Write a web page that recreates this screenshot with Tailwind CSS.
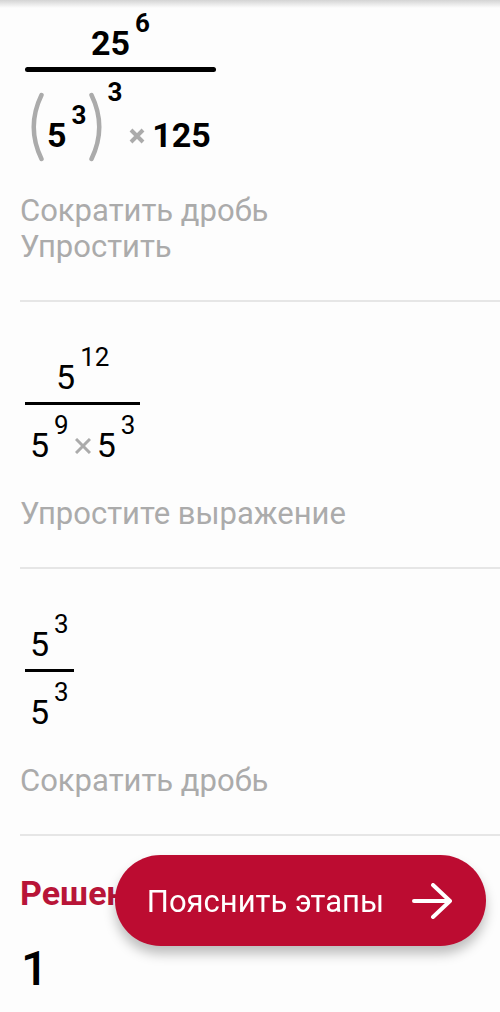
<!doctype html>
<html lang="ru">
  <head>
    <meta charset="utf-8" />
    <meta name="viewport" content="width=device-width, initial-scale=1" />
    <script src="https://cdn.jsdelivr.net/npm/@tailwindcss/browser@4"></script>
    <title>Решение</title>
  </head>
  <body class="min-h-screen bg-[#fdfdfd] font-['Roboto',sans-serif] text-black">
    <div class="absolute inset-x-0 top-0 h-2 bg-linear-to-b from-[#d4d4d4] to-transparent"></div>
    <main class="pl-5">
      <section class="border-b-2 border-[#e6e6e6] pt-[10px] pb-[35px]">
        <div class="ml-[5px] flex w-fit flex-col text-[34px] leading-[34px] font-bold">
          <div class="flex items-end justify-center gap-[5px]">
            <span>25</span>
            <span class="mb-6 text-[26px] leading-[26px]">6</span>
          </div>
          <div class="my-[7px] h-[5px] rounded-full bg-black"></div>
          <div class="flex items-end px-[5px]">
            <svg class="mr-[3px] ml-px h-[70px] w-[13px]" viewBox="0 0 13 70" fill="none" stroke="#ababab" stroke-width="4.5" stroke-linecap="round">
              <path d="M10.5 3Q-5 35 10.5 67" />
            </svg>
            <span class="mb-[10px]">5</span>
            <span class="mb-[34px] ml-[5px] text-[26px] leading-[26px]">3</span>
            <svg class="ml-[3px] h-[70px] w-[13px]" viewBox="0 0 13 70" fill="none" stroke="#ababab" stroke-width="4.5" stroke-linecap="round">
              <path d="M2.5 3Q18 35 2.5 67" />
            </svg>
            <span class="mb-[57px] ml-[5px] text-[26px] leading-[26px]">3</span>
            <svg class="mx-[7px] mb-[18px] size-4" viewBox="0 0 16 16" stroke="#ababab" stroke-width="4">
              <path d="M2 2L14 14M14 2L2 14" />
            </svg>
            <span class="mb-[10px]">125</span>
          </div>
        </div>
        <p class="mt-[31px] text-[31px] leading-9 text-[#ababab]">Сократить дробь<br />Упростить</p>
      </section>

      <section class="border-b-2 border-[#e6e6e6] pt-[42px] pb-[35px]">
        <div class="ml-[5px] flex w-fit flex-col text-[34px] leading-[34px]">
          <div class="flex items-end justify-center gap-[5px]">
            <span>5</span>
            <span class="mb-6 text-[26px] leading-[26px]">12</span>
          </div>
          <div class="mt-2 mb-[7px] h-[3px] bg-black"></div>
          <div class="flex items-end px-[5px]">
            <span>5</span>
            <span class="mb-6 ml-[5px] text-[26px] leading-[26px]">9</span>
            <svg class="mx-[6px] mb-2 size-4" viewBox="0 0 16 16" stroke="#ababab" stroke-width="3">
              <path d="M1 1L15 15M15 1L1 15" />
            </svg>
            <span>5</span>
            <span class="mb-6 ml-[5px] text-[26px] leading-[26px]">3</span>
          </div>
        </div>
        <p class="mt-[34px] text-[31px] leading-9 text-[#ababab]">Упростите выражение</p>
      </section>

      <section class="border-b-2 border-[#e6e6e6] pt-[42px] pb-[35px]">
        <div class="ml-[5px] flex w-fit flex-col text-[34px] leading-[34px]">
          <div class="flex items-end justify-center gap-[5px]">
            <span>5</span>
            <span class="mb-6 text-[26px] leading-[26px]">3</span>
          </div>
          <div class="mt-2 mb-[7px] h-[3px] bg-black"></div>
          <div class="flex items-end justify-center gap-[5px] px-[5px]">
            <span>5</span>
            <span class="mb-6 text-[26px] leading-[26px]">3</span>
          </div>
        </div>
        <p class="mt-[34px] text-[31px] leading-9 text-[#ababab]">Сократить дробь</p>
      </section>

      <section class="pt-[37px]">
        <h2 class="text-[34px] leading-10 font-bold text-[#b81538]">Решение</h2>
        <p class="mt-7 ml-px text-[48px] leading-[56px] font-medium">1</p>
      </section>
    </main>

    <button
      type="button"
      class="fixed right-[14px] bottom-[66px] flex h-[91px] items-center gap-6 rounded-full bg-[#bc0c31] pr-[34px] pl-8 text-[31px] text-white shadow-[0_8px_12px_rgba(0,0,0,0.25)]"
    >
      <span class="pt-1 pr-1">Пояснить этапы</span>
      <svg class="h-9 w-10" viewBox="0 0 40 36" fill="none" stroke="currentColor" stroke-width="4" stroke-linecap="round" stroke-linejoin="round">
        <path d="M2 18H38M21 2L38 18L21 34" />
      </svg>
    </button>
  </body>
</html>
